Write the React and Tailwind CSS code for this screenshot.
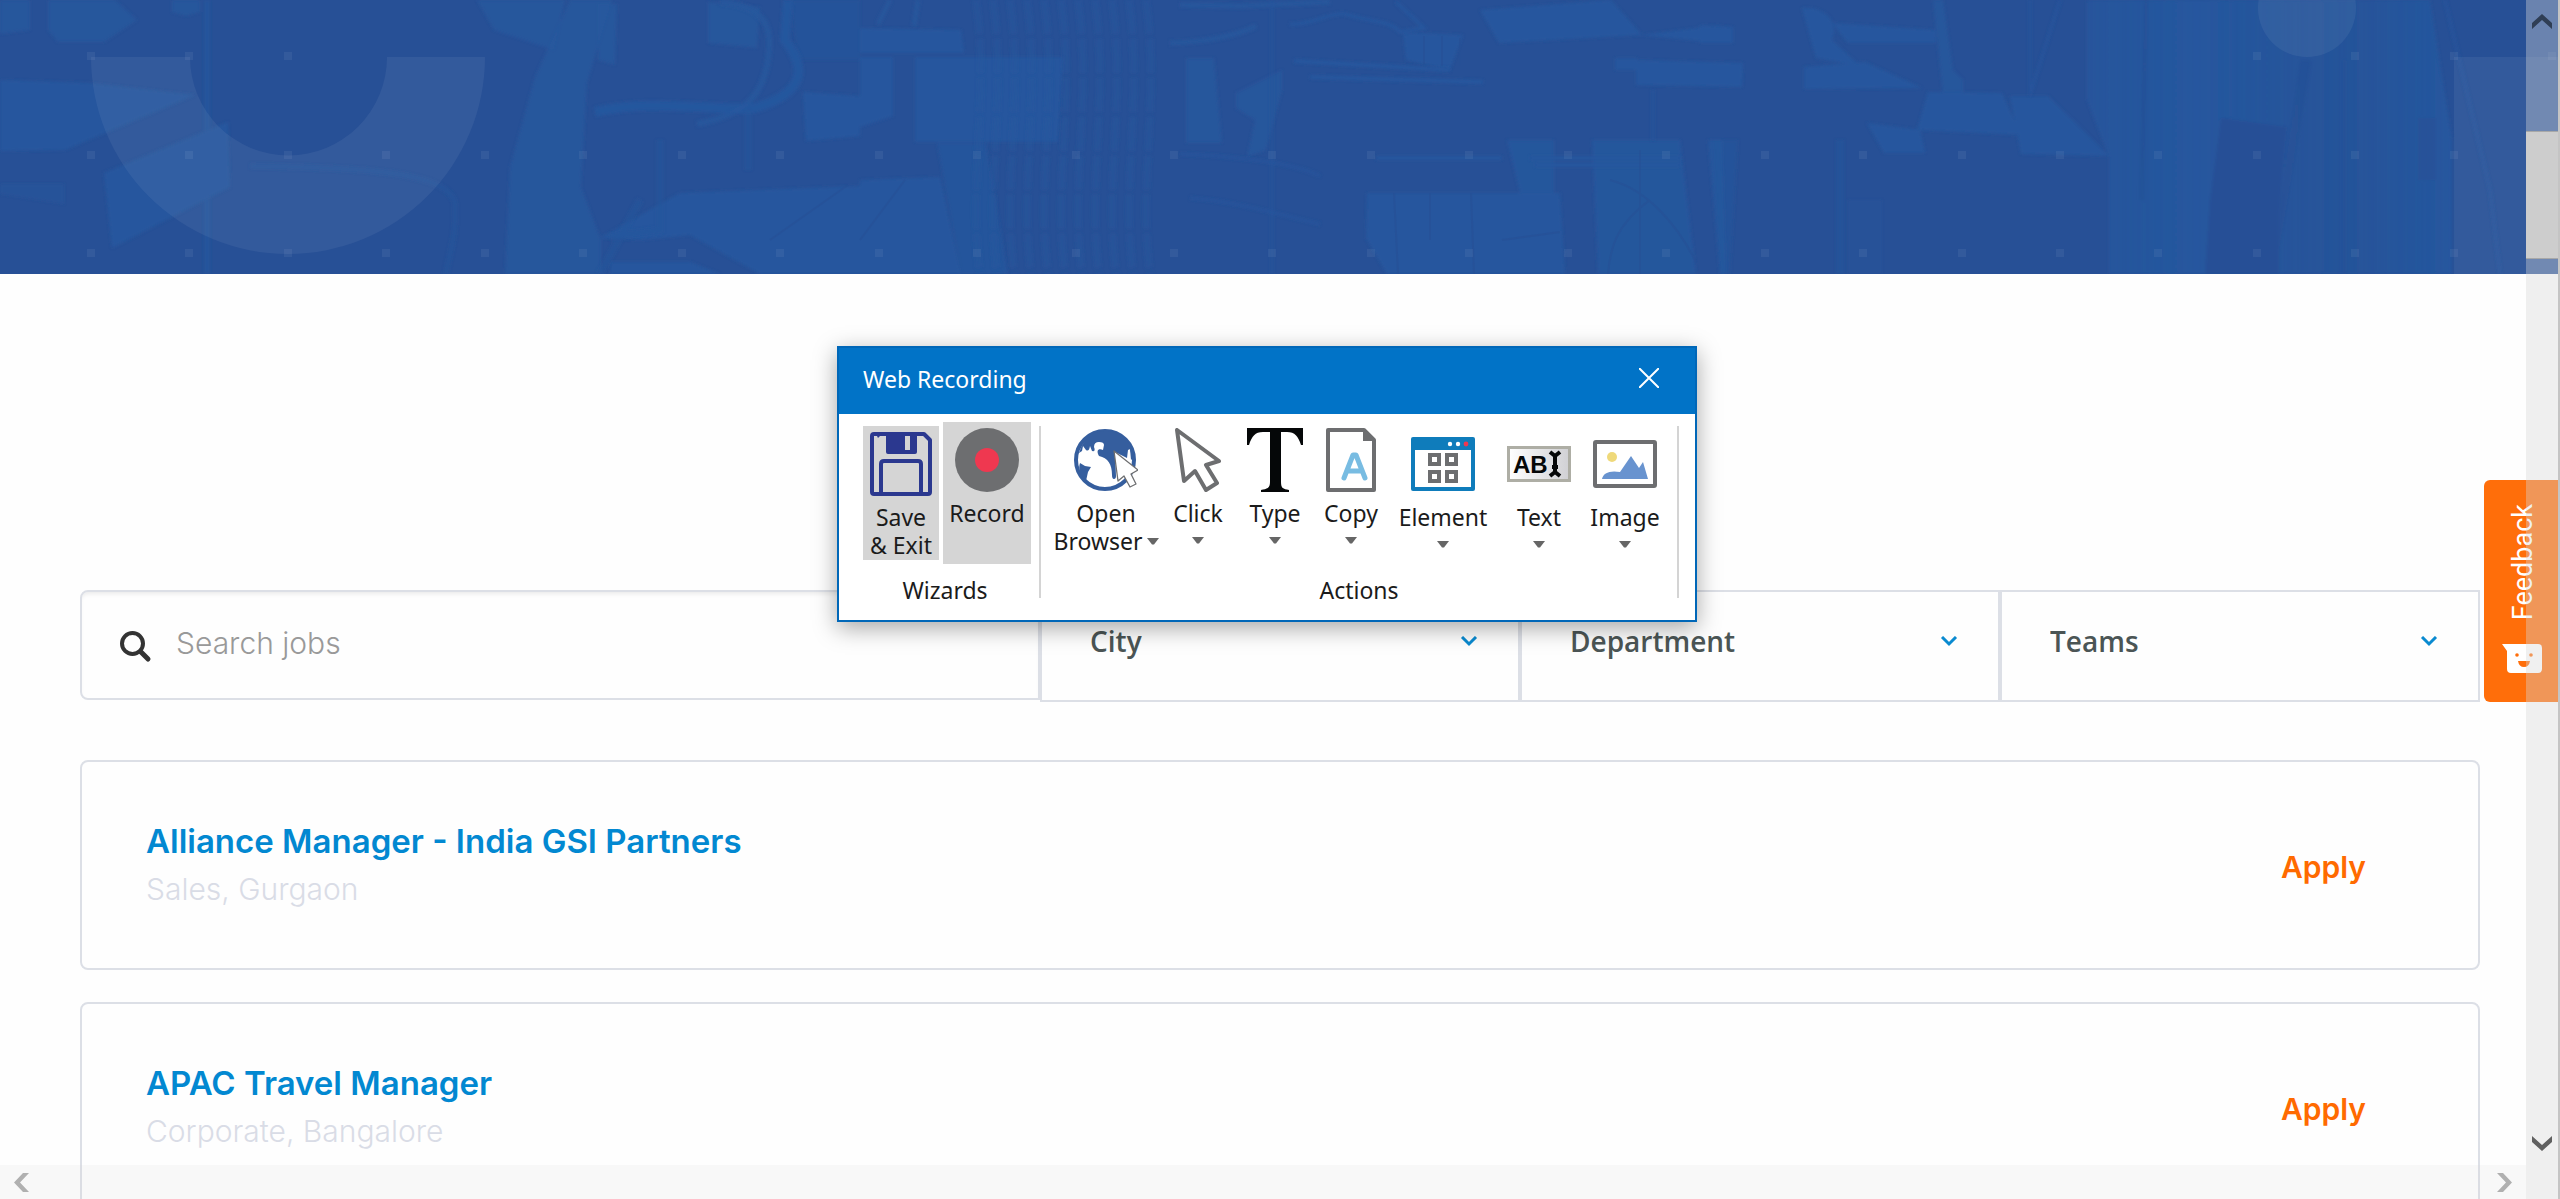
import React from "react";

const HEADING = "font-['Inter','Open_Sans',sans-serif]";

function HeroArt() {
  const dots = [];
  for (let i = 0; i < 26; i++) {
    const x = 87 + Math.round(i * 98.45);
    if (i < 3 || i > 21) dots.push([x, 52]);
    dots.push([x, 151], [x, 249]);
  }
  const stripes = [];
  for (let i = 0; i < 11; i++) stripes.push(976 + i * 17);
  return (
    <svg className="h-full w-full" viewBox="0 0 2560 274" preserveAspectRatio="xMidYMin slice" aria-hidden="true">
      <defs>
        <filter id="soft" x="-5%" y="-5%" width="110%" height="110%">
          <feGaussianBlur stdDeviation="1.5" />
        </filter>
        <linearGradient id="fade" x1="0" y1="0" x2="1" y2="0">
          <stop offset="0" stopColor="#25579e" stopOpacity="0.75" />
          <stop offset="0.3" stopColor="#25579e" />
          <stop offset="0.7" stopColor="#25559b" stopOpacity="0.7" />
          <stop offset="1" stopColor="#25579e" />
        </linearGradient>
      </defs>
      <rect width="2560" height="274" fill="#275096" />
      <g filter="url(#soft)" fill="#25579e">
        <path d="M48 0H115L137 20L104 42H58L48 30ZM172 0h28v12l-14 4-14-4ZM0 0h30v30l-30 4Z" opacity=".8" />
        <path d="M0 80L90 83L195 95L65 150L0 151Z" />
        <path d="M104 173L228 122L230 187L112 248Z" />
        <path d="M0 184h64v20l-64-10Z" opacity=".4" />
        <rect x="204" width="6" height="274" opacity=".7" />
        <path d="M477 0H565L554 50L494 30Z" opacity=".8" />
        <path d="M570 0H612L587 83L581 187L601 240V274H505L510 167L535 77Z" opacity=".8" />
        <path d="M598 4H617L615 65L598 60ZM708 2L760 7L757 48L708 43Z" opacity=".8" />
        <path d="M790 0h70v60h-62ZM818 0h26v30h-26Z" opacity=".5" />
        <path d="M803 92L860 96V136L806 141Z" />
        <path d="M600 238L680 193L860 186V274H760L690 235L640 240Z" />
        <path d="M610 262L690 262L720 274H610Z" />
        <path d="M860 28L961 30L964 53H860ZM860 57H893V116L860 127ZM915 57H1063L1058 142H915Z" />
        <path d="M860 180L940 177L961 274H860Z" />
        <path d="M937 143H986L1008 274H961Z" opacity=".7" />
        <path d="M1186 58H1214L1222 143H1186ZM1236 93L1282 70V90L1266 150L1247 157L1255 120L1236 108Z" opacity=".8" />
        <path d="M1480 10L1611 0L1642 35L1499 43ZM1403 32L1463 35L1450 70L1406 60Z" />
        <path d="M1640 35L1720 25V43ZM1636 60L1743 63L1742 87L1636 85ZM1615 58h22v12h-22Z" />
        <path d="M1367 193H1560L1565 274H1387L1366 238Z" />
        <path d="M1507 140H1554V193H1520ZM1592 140H1680L1696 274H1598ZM1708 140H1722L1726 274H1720Z" opacity=".85" />
        <path d="M1700 25L1733 27V43H1700ZM1804 67L1865 62L1922 88L1804 89ZM1832 23L1936 30V43H1848Z" />
        <path d="M1802 8C1822 6 1840 20 1832 40L1860 66L1816 58Z" />
        <path d="M1933 0h10l10 70l10 10v16h-20Z" opacity=".8" />
        <path d="M2010 96H2048L2109 156L2021 154ZM1928 92L2002 93L2021 135L1917 130ZM1867 123L1920 130L1925 153H1884Z" />
        <path d="M1714 140h24l-8 134h-10ZM1836 140h8v134h-8Z" opacity=".5" />
        <path d="M1848 200h34v74h-34Z" opacity=".35" />
        <path d="M2087 0H2430L2452 140V274H2109V157L2087 100Z" fill="url(#fade)" />
        <path d="M2221 118L2287 127L2279 213V274H2205L2210 200Z" fill="#275096" />
        <path d="M2144 0h4l-4 200h-5ZM2343 60h3v214h-3ZM2300 60L2270 274h5L2312 60Z" fill="#275096" opacity=".6" />
        <path d="M2418 118h18v62h-18Z" fill="#275096" opacity=".6" />
      </g>
      <g filter="url(#soft)" fill="none" stroke="#25579e">
        <path d="M720 2C755 5 772 18 769 50C766 95 745 115 697 124" strokeWidth="6" opacity=".8" />
        <path d="M595 112C650 98 720 112 755 108C815 90 800 60 785 40L788 0" strokeWidth="10" opacity=".9" />
        <path d="M250 166C340 168 452 168 455 205C456 240 450 250 446 274" strokeWidth="5" opacity=".5" />
        <path d="M660 140V230L610 237M748 110V170M640 200L600 274" strokeWidth="7" opacity=".5" />
        <path d="M890 0L878 24M918 0L914 26M1180 5L1240 6L1330 2M1170 43C1210 42 1240 34 1256 26" strokeWidth="5" opacity=".8" />
        <path d="M1294 61L1450 70M1310 77L1483 82M1376 158H1502M1530 158H1680M1535 165H1680" strokeWidth="4" />
        <path d="M1290 24C1310 26 1330 12 1345 14C1370 22 1390 20 1400 32L1424 28L1396 2" strokeWidth="3" />
        <path d="M1180 154C1230 156 1290 162 1320 176M1190 198C1240 202 1280 215 1320 224" strokeWidth="3" opacity=".6" />
        <path d="M1272 0V274M1653 90V140M2030 0V95M2060 0L2030 95M2445 0L2490 190L2500 274" strokeWidth="3" opacity=".6" />
        {stripes.map((x) => (
          <path key={x} d={`M${x} 0C${x + 14} 100 ${x - 8} 180 ${x + 4} 274`} strokeWidth="7" strokeDasharray="34 5" opacity=".4" />
        ))}
      </g>
      <g fill="none" stroke="#275096" opacity=".6">
        <path d="M1394 193L1398 274M1430 193V240M1471 193L1474 274M1610 180C1650 190 1680 230 1696 262M1650 200C1615 225 1610 250 1608 274M860 240L905 180M770 240L848 185" strokeWidth="2" />
        <path d="M1502 240L1560 232M1640 150V274M1460 38v28M1442 36v30M1424 36v28" strokeWidth="2" />
      </g>
      <g fill="#ffffff" fillOpacity=".06">
        <path d="M91 57H190A98 98 0 0 0 387 57H485A197 197 0 0 1 91 57Z" />
        <circle cx="2307" cy="8" r="49" />
        <rect x="2454" y="57" width="106" height="217" />
        {dots.map(([x, y]) => (
          <rect key={`${x}-${y}`} x={x} y={y} width="8" height="8" />
        ))}
      </g>
    </svg>
  );
}

function SaveIcon() {
  return (
    <svg width="62" height="64" viewBox="0 0 62 64" fill="none" aria-hidden="true">
      <path d="M4 2H54L60 8V60Q60 62 58 62H4Q2 62 2 60V4Q2 2 4 2Z" stroke="#2b388f" strokeWidth="4" strokeLinejoin="round" />
      <path d="M16 2H47V20Q47 22 45 22H18Q16 22 16 20ZM6 2h6L8 6Z" fill="#2b388f" />
      <path d="M35 4h5v14h-5Z" fill="#d4d4d4" />
      <path d="M11 61V32Q11 29 14 29H48Q51 29 51 32V61" stroke="#2b388f" strokeWidth="4" />
    </svg>
  );
}

function RecordIcon() {
  return (
    <svg width="64" height="64" viewBox="0 0 64 64" aria-hidden="true">
      <circle cx="32" cy="32" r="32" fill="#6d6e70" />
      <circle cx="32" cy="32" r="12" fill="#ef3850" />
    </svg>
  );
}

function GlobeIcon() {
  return (
    <svg width="64" height="64" viewBox="0 0 64 64" aria-hidden="true">
      <circle cx="31" cy="32" r="29" fill="#fff" stroke="#355e9e" strokeWidth="4" />
      <path d="M5 25C9 11 19 3 31 3C46 3 57 13 60 29L57 32L56 21L54 22L53 30L41 24L42 48Q42 51 40 51Q38 51 38 47C38 36 34 30 25 28C22 23 24 20 29 22L30 17Q30 14 25 14Q20 14 20 19Q22 24 18 23L16 18Q15 24 12 22L9 18L8 23Z" fill="#355e9e" />
      <path d="M6 35L11 38L17 39L14 44L12 53C6 47 4 41 6 35Z" fill="#355e9e" />
      <path d="M40 23L44 53L50 48L56 59L62 56L57 46L64 42Z" fill="#fff" stroke="#6d6e70" strokeWidth="1.3" strokeLinejoin="round" />
    </svg>
  );
}

function CursorIcon() {
  return (
    <svg width="46" height="64" viewBox="0 0 46 64" fill="none" aria-hidden="true">
      <path d="M2 2L9 53L20 43L31 62L42 55L31 37L44 33Z" stroke="#6d6e70" strokeWidth="4" strokeLinejoin="round" />
    </svg>
  );
}

function TypeIcon() {
  return (
    <svg width="56" height="64" viewBox="0 0 56 64" aria-hidden="true">
      <path d="M0 0H56V17H54C51 8 48 4 40 4H34V54C34 60 36 61 42 62V64H14V62C20 61 23 60 23 54V4H16C8 4 5 8 2 17H0Z" fill="#050708" />
    </svg>
  );
}

function CopyIcon() {
  return (
    <svg width="50" height="64" viewBox="0 0 50 64" fill="none" aria-hidden="true">
      <path d="M2 2H38L48 12V62H2Z" stroke="#6d6e70" strokeWidth="4" strokeLinejoin="round" />
      <path d="M37 1L49 13H37Z" fill="#6d6e70" />
      <path d="M18 50L27 27H30L39 50M22 43H35" stroke="#78bce2" strokeWidth="5" strokeLinecap="round" strokeLinejoin="round" />
    </svg>
  );
}

function ElementIcon() {
  return (
    <svg width="64" height="54" viewBox="0 0 64 54" fill="none" aria-hidden="true">
      <rect width="64" height="54" rx="2" fill="#0f7cbb" />
      <rect x="4" y="13" width="56" height="37" fill="#fff" />
      <circle cx="39" cy="7" r="2.2" fill="#fff" />
      <circle cx="47" cy="7" r="2.2" fill="#fff" />
      <circle cx="55" cy="7" r="2.4" fill="#ef3850" />
      <g stroke="#6d6e70" strokeWidth="4">
        <rect x="19" y="18" width="9" height="9" />
        <rect x="36" y="18" width="9" height="9" />
        <rect x="19" y="35" width="9" height="9" />
        <rect x="36" y="35" width="9" height="9" />
      </g>
    </svg>
  );
}

function TextIcon() {
  return (
    <svg width="64" height="36" viewBox="0 0 64 36" fill="none" aria-hidden="true">
      <defs>
        <linearGradient id="field" x1="0" y1="0" x2="1" y2="0">
          <stop offset="0" stopColor="#fff" />
          <stop offset="1" stopColor="#d0d0d4" />
        </linearGradient>
      </defs>
      <rect x="1.5" y="1.5" width="61" height="33" fill="url(#field)" stroke="#aeaea5" strokeWidth="3" />
      <text x="6" y="27" fill="#050708" className="font-['Liberation_Sans',sans-serif] text-[24px] font-bold">AB</text>
      <path d="M43 6L48 10L53 6M48 10V26M43 30L48 26L53 30M45 21H51" stroke="#050708" strokeWidth="4" strokeLinejoin="round" />
    </svg>
  );
}

function ImageIcon() {
  return (
    <svg width="64" height="48" viewBox="0 0 64 48" fill="none" aria-hidden="true">
      <rect x="2" y="2" width="60" height="44" rx="1" fill="#fff" stroke="#6d6e70" strokeWidth="4" />
      <circle cx="19" cy="17" r="5" fill="#efd97a" />
      <path d="M9 39C10 33 17 30 27 32L38 16L46 28L50 22L55 39Z" fill="#6893cf" />
    </svg>
  );
}

function Caret() {
  return (
    <svg className="shrink-0" width="12" height="7" viewBox="0 0 12 7" aria-hidden="true">
      <path d="M0 0H12L7 6.500H5Z" fill="#666" />
    </svg>
  );
}

function ActionButton({ icon, label, caret = true, className }) {
  return (
    <button type="button" className={`flex flex-col items-center gap-[7px] text-[23px] leading-7 ${className}`}>
      {icon}
      <span className="flex flex-col items-center gap-1">
        {label}
        {caret && <span className="flex pt-1.5"><Caret /></span>}
      </span>
    </button>
  );
}

function RecorderDialog() {
  return (
    <section
      aria-label="Web Recording"
      className="absolute left-[837px] top-[346px] flex w-[860px] flex-col border-2 border-[#0067b8] bg-white font-['Noto_Sans','Open_Sans',sans-serif] text-[23px] leading-7 text-[#1b1b1b] shadow-[0_6px_22px_rgba(0,0,0,0.35)]"
    >
      <header className="flex h-[66px] items-center justify-between bg-[#0173c7] pb-1 pl-6 pr-9 text-white">
        <h2>Web Recording</h2>
        <button type="button" aria-label="Close" className="pb-0.5">
          <svg width="20" height="20" viewBox="0 0 20 20" stroke="#fff" strokeWidth="2" aria-hidden="true">
            <path d="M0 0L20 20M20 0L0 20" />
          </svg>
        </button>
      </header>
      <div className="flex h-[206px] pl-6">
        <div className="flex w-[176px] flex-col justify-between pb-4">
          <div className="flex w-full items-start gap-1 pt-2">
            <button type="button" className="mt-1 flex h-[134px] w-[76px] flex-col items-center gap-[7px] bg-[#d5d5d5] pt-1.5">
              <SaveIcon />
              <span className="whitespace-nowrap">Save<br />&amp; Exit</span>
            </button>
            <ActionButton icon={<RecordIcon />} label="Record" caret={false} className="h-[142px] w-[88px] bg-[#d5d5d5] pt-1.5" />
          </div>
          <h3 className="w-[164px] text-center">Wizards</h3>
        </div>
        <div className="mb-[22px] mt-3 w-0.5 bg-[#d4d4d4]" />
        <div className="flex flex-1 flex-col items-center justify-between pb-4 pt-3.5">
          <div className="flex w-full items-start pl-3.5">
            <button type="button" className="flex w-[102px] flex-col items-center gap-[7px]">
              <GlobeIcon />
              <span className="flex flex-col">
                <span className="text-center">Open</span>
                <span className="flex items-center gap-1">Browser <Caret /></span>
              </span>
            </button>
            <ActionButton icon={<CursorIcon />} label="Click" className="ml-1.5 w-[70px]" />
            <ActionButton icon={<TypeIcon />} label="Type" className="ml-1 w-[76px]" />
            <ActionButton icon={<CopyIcon />} label="Copy" className="w-[76px]" />
            <ActionButton icon={<div className="flex h-[68px] items-end pb-[5px]"><ElementIcon /></div>} label="Element" className="ml-1 w-[100px]" />
            <ActionButton icon={<div className="flex h-[68px] items-center pt-1"><TextIcon /></div>} label="Text" className="ml-2 w-[76px]" />
            <ActionButton icon={<div className="flex h-[68px] items-center pt-1"><ImageIcon /></div>} label="Image" className="ml-1.5 w-[84px]" />
          </div>
          <h3>Actions</h3>
        </div>
        <div className="mb-[22px] mr-4 mt-3 w-0.5 bg-[#d4d4d4]" />
      </div>
    </section>
  );
}

function Filter({ label }) {
  return (
    <div className="relative border-2 border-[#dcdfe6]">
      <select
        aria-label={label}
        defaultValue={label}
        className="h-[108px] w-full appearance-none bg-transparent pb-2.5 pl-12 pr-20 font-['Open_Sans',sans-serif] text-[28px] font-semibold text-[#4b5555] outline-none"
      >
        <option>{label}</option>
      </select>
      <svg className="pointer-events-none absolute right-10 top-11" width="18" height="11" viewBox="0 0 18 11" fill="none" stroke="#0a8ad0" strokeWidth="3" aria-hidden="true">
        <path d="M2 1L9 8L16 1" />
      </svg>
    </div>
  );
}

function JobCard({ title, place }) {
  return (
    <article className="flex h-[210px] shrink-0 items-center justify-between rounded-lg border-2 border-[#dcdfe6] pl-16 pr-28 pt-1">
      <div className="pb-1">
        <h3 className={`${HEADING} text-[33px] font-semibold leading-[48px] text-[#0288d1]`}>{title}</h3>
        <p className={`${HEADING} text-[30px] font-light leading-[48px] text-[#d9dce6]`}>{place}</p>
      </div>
      <a href="#apply" className={`${HEADING} text-[30px] font-semibold leading-10 text-[#ff6a00]`}>Apply</a>
    </article>
  );
}

function FeedbackTab() {
  return (
    <button type="button" className="absolute right-0 top-[480px] flex h-[222px] w-[76px] flex-col items-center rounded-l-md bg-[#ff6e0a] pt-6 font-['Roboto',sans-serif] text-[27px] leading-8 text-white">
      <span className="rotate-180 pr-0.5 [writing-mode:vertical-rl]">Feedback</span>
      <svg className="mt-6" width="40" height="29" viewBox="0 0 40 29" aria-hidden="true">
        <path d="M0 0H36Q40 0 40 4V25Q40 29 36 29H9Q5 29 5 25V7Z" fill="#fff" />
        <circle cx="15" cy="11" r="1.8" fill="#ff6e0a" />
        <circle cx="29" cy="11" r="1.8" fill="#ff6e0a" />
        <path d="M16 17H28Q27 23 22 23Q17 23 16 17Z" fill="#ff6e0a" />
      </svg>
    </button>
  );
}

function Arrow({ d, color, width, height, label }) {
  return (
    <button type="button" aria-label={label}>
      <svg width={width} height={height} viewBox={`0 0 ${width} ${height}`} fill={color} aria-hidden="true">
        <path d={d} />
      </svg>
    </button>
  );
}

function Scrollbars() {
  return (
    <>
      <div className="absolute bottom-0 left-0 right-[34px] flex h-[34px] items-center justify-between bg-[#d8d8d8]/15 px-3.5">
        <Arrow label="Scroll left" width={15} height={19} color="#b0b0b0" d="M9 0H15L6 9.500L15 19H9L0 9.500Z" />
        <Arrow label="Scroll right" width={15} height={19} color="#b0b0b0" d="M6 0H0L9 9.500L0 19H6L15 9.500Z" />
      </div>
      <div className="absolute inset-y-0 right-0 flex w-[34px] flex-col items-center border-r-2 border-[#c4c4c4] bg-[#d8d8d8]/38 pb-12 pt-3.5">
        <Arrow label="Scroll up" width={20} height={15} color="#2f3e55" d="M0 9L10 0L20 9V15L10 6L0 15Z" />
        <div className="mt-[102px] h-32 w-8 shrink-0 border-y border-[#a8a8a8] bg-[#cdcdcd]" />
        <div className="flex-1" />
        <Arrow label="Scroll down" width={20} height={15} color="#606060" d="M0 6L10 15L20 6V0L10 9L0 0Z" />
      </div>
    </>
  );
}

const JOBS = [
  { title: "Alliance Manager - India GSI Partners", place: "Sales, Gurgaon" },
  { title: "APAC Travel Manager", place: "Corporate, Bangalore" },
];

export default function App() {
  return (
    <div className="relative flex h-screen flex-col overflow-hidden bg-[#fefefe]">
      <div className="h-[274px] shrink-0">
        <HeroArt />
      </div>
      <main className="flex flex-col px-20 pt-[316px]">
        <form className="grid grid-cols-5 items-start">
          <label className="col-span-2 flex h-[110px] items-center rounded-l-lg border-2 border-[#dcdfe6] pl-[38px] shadow-[inset_0_4px_4px_-2px_rgba(0,0,0,0.08)]">
            <svg className="mt-1" width="32" height="32" viewBox="0 0 32 32" fill="none" stroke="#333" strokeLinecap="round" aria-label="Search">
              <circle cx="12.500" cy="12.500" r="10.500" strokeWidth="4" />
              <path d="M20.500 20.500L28 28" strokeWidth="5" />
            </svg>
            <input
              type="text"
              aria-label="Search jobs"
              placeholder="Search jobs"
              className={`${HEADING} ml-6 h-full flex-1 bg-transparent pb-1 text-[30px] font-light outline-none placeholder:text-[#999]`}
            />
          </label>
          <Filter label="City" />
          <Filter label="Department" />
          <Filter label="Teams" />
        </form>
        <div className="flex flex-col gap-8 pt-[58px]">
          {JOBS.map((job) => (
            <JobCard key={job.title} {...job} />
          ))}
        </div>
      </main>
      <RecorderDialog />
      <FeedbackTab />
      <Scrollbars />
    </div>
  );
}
